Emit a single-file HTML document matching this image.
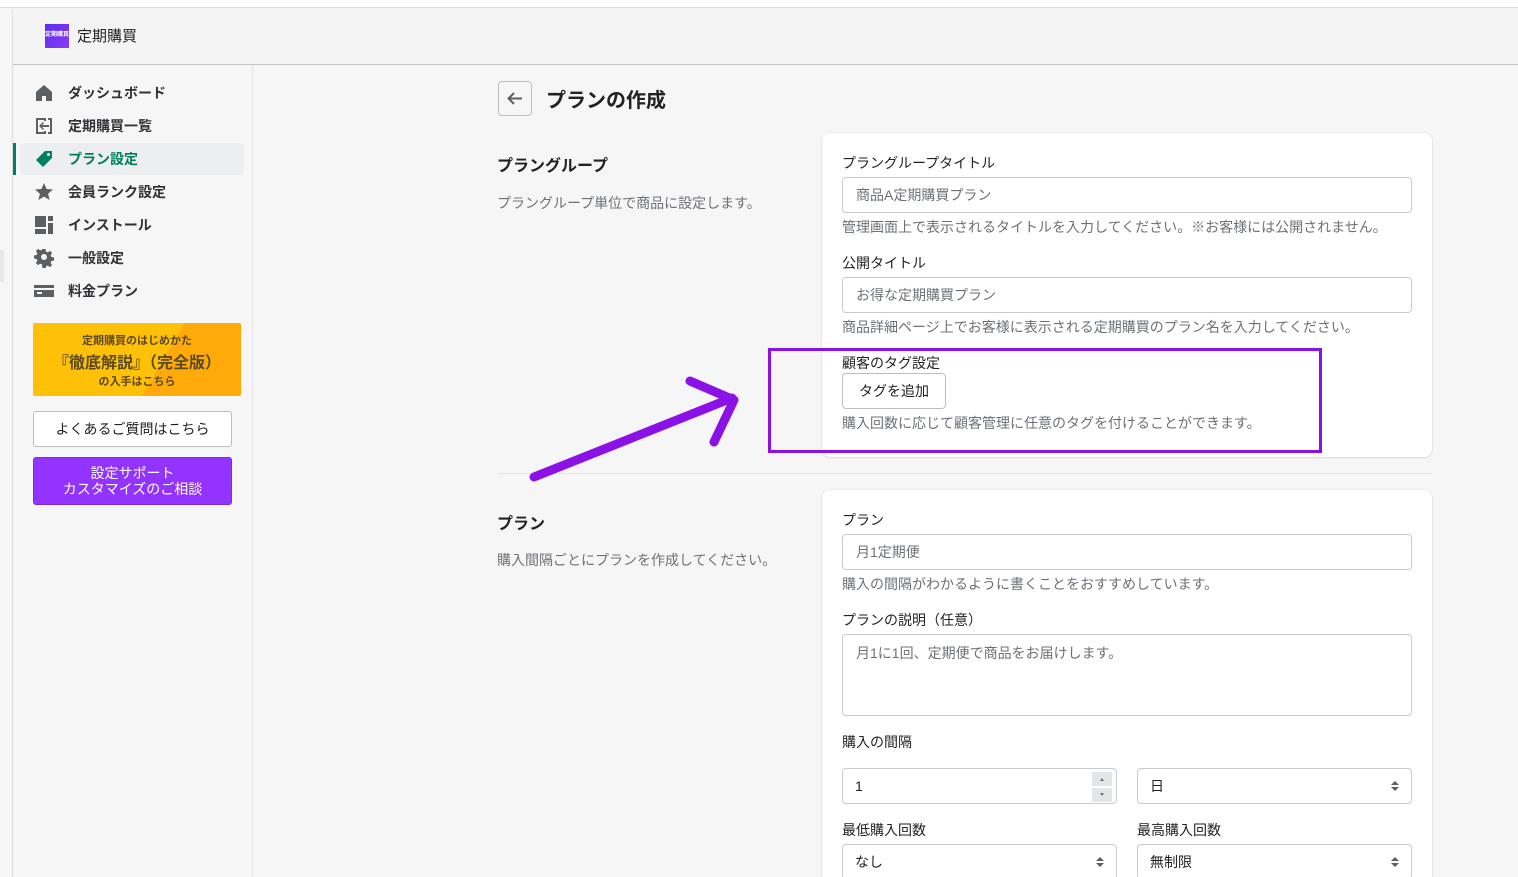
<!DOCTYPE html>
<html><head><meta charset="utf-8"><style>
*{box-sizing:border-box;margin:0;padding:0}
html,body{width:1518px;height:877px;overflow:hidden}
body{background:#f6f6f7;font-family:"Liberation Sans","Noto Sans CJK JP",sans-serif;color:#202223;position:relative}
.a{position:absolute}
.nav{font-size:14px;color:#303235;font-weight:bold}
.nav .it{position:absolute;left:20px;width:224px;height:32px}
.nav .it span{position:absolute;left:48px;top:6px}
.nav svg{position:absolute;left:14px;top:6px}
.lbl{font-size:14px;color:#202223}
.inp{position:absolute;background:#fff;border:1px solid #c9cccf;border-radius:4px;font-size:14px;color:#6d7175;padding-left:13px;display:flex;align-items:center}
.help{font-size:14px;color:#6d7175}
.sel{position:absolute;background:#fff;border:1px solid #c9cccf;border-radius:4px;font-size:14px;color:#202223;padding-left:12px;display:flex;align-items:center}
.car{position:absolute;right:12px;top:50%;margin-top:-6px;width:8px;height:12px}
</style></head><body>
<div class="a" style="left:0;top:0;width:1518px;height:8px;background:#fff;border-bottom:1px solid #dcdcdc"></div>
<div class="a" style="left:12px;top:9px;width:1px;height:868px;background:#dcdcdc"></div>
<div class="a" style="left:13px;top:9px;width:1505px;height:56px;background:#f4f4f4;border-bottom:1px solid #c4c6ca"></div>
<div class="a" style="left:45px;top:24px;width:24px;height:24px;background:linear-gradient(135deg,#5b2df0,#8a3cf5);color:#fff;font-size:6px;line-height:22px;text-align:center;font-weight:bold">定期購買</div>
<div class="a" style="left:77px;top:25px;font-size:15px">定期購買</div>
<div class="a" style="left:252px;top:65px;width:1px;height:812px;background:#e1e3e5"></div>
<div class="a" style="left:0;top:250px;width:4px;height:32px;background:#e8e8e8"></div>
<div class="nav">
<div class="it" style="top:77px"><svg width="20" height="20" viewBox="0 0 20 20"><path d="M10 2 L18 9 V18 H12 V13 H8 V18 H2 V9 Z" fill="#5c5f62"/></svg><span>ダッシュボード</span></div>
<div class="it" style="top:110px"><svg width="20" height="20" viewBox="0 0 20 20"><path d="M2 2h10v3h-2V4H4v12h6v-1h2v3H2z M14 2h4v16h-4v-2h2V4h-2z" fill="#5c5f62"/><path d="M15 9H8l2-2-1-1-4 4 4 4 1-1-2-2h7z" fill="#5c5f62"/></svg><span>定期購買一覧</span></div>
<div class="a" style="left:13px;top:143px;width:3px;height:32px;background:#008060"></div>
<div class="it" style="top:143px;background:#edeeef;border-radius:4px"><svg width="20" height="20" viewBox="0 0 20 20"><path d="M11 2h7v7l-9 9-7-7z" fill="#008060"/><circle cx="14.5" cy="5.5" r="1.5" fill="#edeeef"/></svg><span style="color:#007f5f">プラン設定</span></div>
<div class="it" style="top:176px"><svg width="20" height="20" viewBox="0 0 20 20"><path d="M10 1l2.6 6 6.4.5-4.9 4.2 1.5 6.3L10 14.6 4.4 18l1.5-6.3L1 7.5 7.4 7z" fill="#5c5f62"/></svg><span>会員ランク設定</span></div>
<div class="it" style="top:209px"><svg width="20" height="20" viewBox="0 0 20 20"><rect x="1" y="1" width="11" height="11" fill="#5c5f62"/><rect x="14" y="1" width="5" height="5" fill="#5c5f62"/><rect x="14" y="8" width="5" height="11" fill="#5c5f62"/><rect x="1" y="14" width="11" height="5" fill="#5c5f62"/></svg><span>インストール</span></div>
<div class="it" style="top:242px"><svg width="20" height="20" viewBox="0 0 20 20"><path d="M8.5 1h3l.5 2.6 1.8.8 2.2-1.5 2.1 2.1-1.5 2.2.8 1.8 2.6.5v3l-2.6.5-.8 1.8 1.5 2.2-2.1 2.1-2.2-1.5-1.8.8-.5 2.6h-3L8 16.4l-1.8-.8L4 17.1 1.9 15l1.5-2.2-.8-1.8L0 10.5v-3l2.6-.5.8-1.8L1.9 3 4 .9l2.2 1.5L8 1.6z" fill="#5c5f62"/><circle cx="10" cy="9" r="3" fill="#f6f6f7"/></svg><span>一般設定</span></div>
<div class="it" style="top:275px"><svg width="20" height="20" viewBox="0 0 20 20"><path d="M0 4h20v12H0z" fill="#5c5f62"/><rect x="0" y="7" width="20" height="2" fill="#f6f6f7"/><rect x="3" y="11" width="5" height="2" fill="#f6f6f7"/></svg><span>料金プラン</span></div>
</div>
<div class="a" style="left:33px;top:323px;width:208px;height:73px;background:linear-gradient(120deg,#ffc107 0%,#ffc107 60%,#ffa90a 61%,#ffa90a 100%);border-radius:2px;text-align:center;color:#5a4a20;font-weight:bold">
<div style="font-size:11px;margin-top:9px">定期購買のはじめかた</div>
<div style="font-size:16px;margin-top:1px">『徹底解説』（完全版）</div>
<div style="font-size:11px;margin-top:0px">の入手はこちら</div></div>
<div class="a" style="left:33px;top:411px;width:199px;height:36px;background:#fff;border:1px solid #babfc3;border-radius:3px;font-size:14px;text-align:center;line-height:34px;color:#202223">よくあるご質問はこちら</div>
<div class="a" style="left:33px;top:457px;width:199px;height:48px;background:#9333ff;border:1px solid #7c2ce0;border-radius:3px;font-size:14px;text-align:center;color:#fff;line-height:16px;padding-top:7px">設定サポート<br>カスタマイズのご相談</div>

<div class="a" style="left:498px;top:81px;width:34px;height:35px;border:1px solid #babfc3;border-radius:4px;background:#f6f6f7"><svg width="32" height="33" viewBox="0 0 32 33"><path d="M23 16.5H10M15 11l-5.5 5.5L15 22" stroke="#5c5f62" stroke-width="2" fill="none"/></svg></div>
<div class="a" style="left:546px;top:84px;font-size:20px;font-weight:bold">プランの作成</div>
<div class="a" style="left:497px;top:152px;font-size:16px;font-weight:bold">プラングループ</div>
<div class="a help" style="left:497px;top:193px">プラングループ単位で商品に設定します。</div>
<div class="a" style="left:497px;top:473px;width:935px;height:1px;background:#e1e3e5"></div>
<div class="a" style="left:497px;top:510px;font-size:16px;font-weight:bold">プラン</div>
<div class="a help" style="left:497px;top:550px">購入間隔ごとにプランを作成してください。</div>

<div class="a" style="left:822px;top:133px;width:610px;height:324px;background:#fff;border-radius:8px;box-shadow:0 0 0 1px rgba(63,63,68,.04),0 1px 2px rgba(63,63,68,.12)"></div>
<div class="a lbl" style="left:842px;top:153px">プラングループタイトル</div>
<div class="inp" style="left:842px;top:177px;width:570px;height:36px">商品A定期購買プラン</div>
<div class="a help" style="left:842px;top:217px">管理画面上で表示されるタイトルを入力してください。※お客様には公開されません。</div>
<div class="a lbl" style="left:842px;top:253px">公開タイトル</div>
<div class="inp" style="left:842px;top:277px;width:570px;height:36px">お得な定期購買プラン</div>
<div class="a help" style="left:842px;top:317px">商品詳細ページ上でお客様に表示される定期購買のプラン名を入力してください。</div>
<div class="a lbl" style="left:842px;top:353px">顧客のタグ設定</div>
<div class="a" style="left:842px;top:373px;width:104px;height:36px;border:1px solid #babfc3;border-radius:4px;background:#fff;font-size:14px;text-align:center;line-height:34px">タグを追加</div>
<div class="a help" style="left:842px;top:413px">購入回数に応じて顧客管理に任意のタグを付けることができます。</div>
<div class="a" style="left:768px;top:348px;width:554px;height:105px;border:3px solid #8a12e6"></div>
<svg class="a" style="left:0;top:0" width="1518" height="877"><g stroke="#8a12e6" stroke-width="9" stroke-linecap="round" stroke-linejoin="round" fill="none"><path d="M534 477L732 398"/><path d="M690 381L734 400L714 442"/></g></svg>

<div class="a" style="left:822px;top:490px;width:610px;height:400px;background:#fff;border-radius:8px;box-shadow:0 0 0 1px rgba(63,63,68,.04),0 1px 2px rgba(63,63,68,.12)"></div>
<div class="a lbl" style="left:842px;top:510px">プラン</div>
<div class="inp" style="left:842px;top:534px;width:570px;height:36px">月1定期便</div>
<div class="a help" style="left:842px;top:574px">購入の間隔がわかるように書くことをおすすめしています。</div>
<div class="a lbl" style="left:842px;top:610px">プランの説明（任意）</div>
<div class="inp" style="left:842px;top:634px;width:570px;height:82px;align-items:flex-start;padding-top:8px">月1に1回、定期便で商品をお届けします。</div>
<div class="a lbl" style="left:842px;top:732px">購入の間隔</div>
<div class="sel" style="left:842px;top:768px;width:275px;height:36px">1<div class="a" style="right:4px;top:3px;width:20px;height:14px;background:#e4e5e7"><svg width="20" height="14" viewBox="0 0 20 14"><path d="M8 9l2-3 2 3z" fill="#6d7175"/></svg></div><div class="a" style="right:4px;top:19px;width:20px;height:14px;background:#e4e5e7"><svg width="20" height="14" viewBox="0 0 20 14"><path d="M8 5l2 3 2-3z" fill="#6d7175"/></svg></div></div>
<div class="sel" style="left:1137px;top:768px;width:275px;height:36px">日<svg class="car" viewBox="0 0 8 12"><path d="M0 5L4 1L8 5ZM0 7L4 11L8 7Z" fill="#5c5f62"/></svg></div>
<div class="a lbl" style="left:842px;top:820px">最低購入回数</div>
<div class="a lbl" style="left:1137px;top:820px">最高購入回数</div>
<div class="sel" style="left:842px;top:844px;width:275px;height:36px">なし<svg class="car" viewBox="0 0 8 12"><path d="M0 5L4 1L8 5ZM0 7L4 11L8 7Z" fill="#5c5f62"/></svg></div>
<div class="sel" style="left:1137px;top:844px;width:275px;height:36px">無制限<svg class="car" viewBox="0 0 8 12"><path d="M0 5L4 1L8 5ZM0 7L4 11L8 7Z" fill="#5c5f62"/></svg></div>
</body></html>
